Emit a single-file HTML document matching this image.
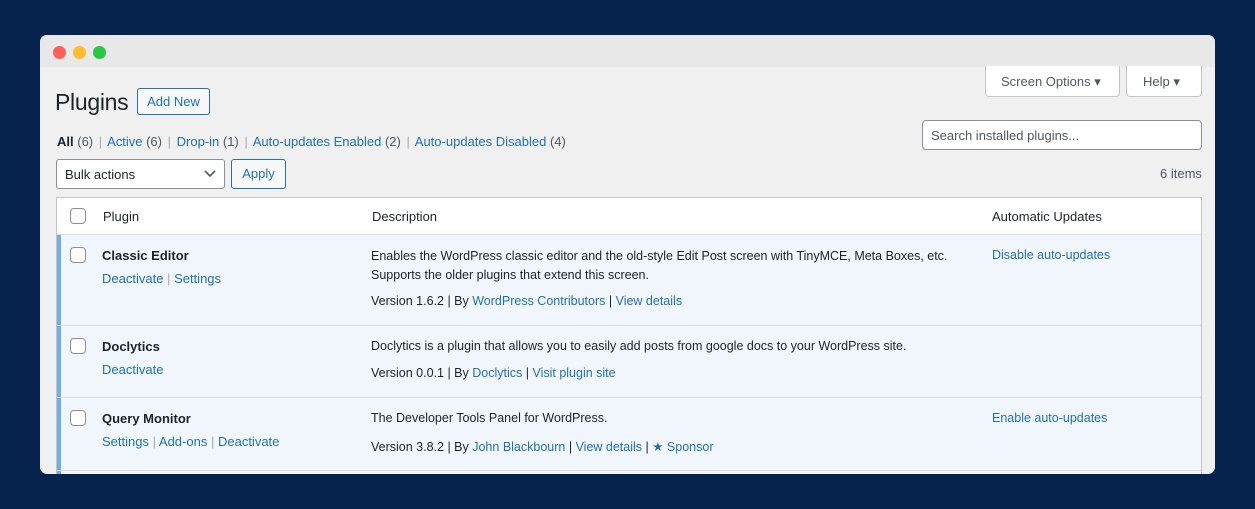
<!DOCTYPE html>
<html><head><style>
*{margin:0;padding:0;box-sizing:border-box}
body{width:1255px;height:509px;background:#06234d;font-family:"Liberation Sans",sans-serif;font-size:13px;color:#1d2327;position:relative;overflow:hidden}
.win{position:absolute;left:40px;top:35px;width:1175px;height:439px;background:#f0f0f1;border-radius:7px;overflow:hidden}
.bar{position:absolute;left:0;top:0;width:100%;height:32px;background:#e8e8e8}
.dot{position:absolute;top:11px;width:13px;height:13px;border-radius:50%}
.a{position:absolute;white-space:nowrap}
a,.l{color:#2271b1;text-decoration:none}
.btn{position:absolute;border:1px solid #2271b1;border-radius:3px;color:#2271b1;background:#f6f7f7;text-align:center}
.sbtn{position:absolute;border:1px solid #c3c4c7;border-radius:3px;background:#fff;color:#50575e;font-size:13px}
.cb{position:absolute;width:16px;height:16px;border:1px solid #8c8f94;border-radius:4px;background:#fff}
.tbl{position:absolute;left:16px;top:162px;width:1146px;height:290px;border:1px solid #c3c4c7;background:#fff}
.row{position:absolute;left:0;width:1144px;background:#f0f6fc;border-top:1px solid #dcdcde}
.row:before{content:"";position:absolute;left:0;top:0;bottom:0;width:4px;background:#72aee6}
.sep{color:#a7aaad}
.fs{margin:0 2px}
.g{color:#50575e}
</style></head><body>
<div class="win">
<div class="bar"></div>
<div class="dot" style="left:13px;background:#fe5f57"></div>
<div class="dot" style="left:33px;background:#febc2e"></div>
<div class="dot" style="left:53px;background:#28c840"></div>

<div class="sbtn" style="left:945px;top:31px;width:135px;height:31px;border-top:none;border-radius:0 0 4px 4px;padding:8px 0 0 15px">Screen Options ▾</div>
<div class="sbtn" style="left:1086px;top:31px;width:76px;height:31px;border-top:none;border-radius:0 0 4px 4px;padding:8px 0 0 16px">Help ▾</div>

<div class="a" style="left:15px;top:54px;font-size:23px;color:#1d2327;letter-spacing:-0.3px">Plugins</div>
<div class="btn" style="left:97px;top:53px;width:73px;height:27px;line-height:25px;font-size:13px">Add New</div>

<div class="a" style="left:17px;top:99px;font-size:13px"><b style="font-weight:600;color:#1d2327">All</b> <span class="g">(6)</span> <span class="sep fs">|</span> <span class="l">Active</span> <span class="g">(6)</span> <span class="sep fs">|</span> <span class="l">Drop-in</span> <span class="g">(1)</span> <span class="sep fs">|</span> <span class="l">Auto-updates Enabled</span> <span class="g">(2)</span> <span class="sep fs">|</span> <span class="l">Auto-updates Disabled</span> <span class="g">(4)</span></div>

<div style="position:absolute;left:882px;top:85px;width:280px;height:30px;border:1px solid #8c8f94;border-radius:4px;background:#fff;padding:7px 8px;color:#50575e">Search installed plugins...</div>

<div style="position:absolute;left:16px;top:124px;width:169px;height:30px;border:1px solid #8c8f94;border-radius:3px;background:#fff;padding:7px 8px">Bulk actions<svg style="position:absolute;right:8px;top:10px" width="12" height="8" viewBox="0 0 12 8"><path d="M1 1l5 5 5-5" fill="none" stroke="#50575e" stroke-width="1.6"/></svg></div>
<div class="btn" style="left:191px;top:124px;width:55px;height:30px;line-height:28px">Apply</div>
<div class="a" style="left:1120px;top:131px;color:#50575e">6 items</div>

<div class="tbl">
<div class="cb" style="left:13px;top:10px"></div>
<div class="a" style="left:46px;top:11px;font-size:13px">Plugin</div>
<div class="a" style="left:315px;top:11px">Description</div>
<div class="a" style="left:935px;top:11px">Automatic Updates</div>

<div class="row" style="top:36px;height:91px">
<div class="cb" style="left:13px;top:12px"></div>
<div class="a" style="left:45px;top:13px;font-weight:bold">Classic Editor</div>
<div class="a" style="left:45px;top:36px"><span class="l">Deactivate</span> <span class="sep">|</span> <span class="l">Settings</span></div>
<div class="a" style="left:314px;top:12px;font-size:12.5px;line-height:19px">Enables the WordPress classic editor and the old-style Edit Post screen with TinyMCE, Meta Boxes, etc.<br>Supports the older plugins that extend this screen.</div>
<div class="a" style="left:314px;top:59px;font-size:12.5px">Version 1.6.2 | By <span class="l">WordPress Contributors</span> | <span class="l">View details</span></div>
<div class="a" style="left:935px;top:13px;font-size:12.5px"><span class="l">Disable auto-updates</span></div>
</div>

<div class="row" style="top:127px;height:72px">
<div class="cb" style="left:13px;top:12px"></div>
<div class="a" style="left:45px;top:13px;font-weight:bold">Doclytics</div>
<div class="a" style="left:45px;top:36px"><span class="l">Deactivate</span></div>
<div class="a" style="left:314px;top:13px;font-size:12.5px">Doclytics is a plugin that allows you to easily add posts from google docs to your WordPress site.</div>
<div class="a" style="left:314px;top:40px;font-size:12.5px">Version 0.0.1 | By <span class="l">Doclytics</span> | <span class="l">Visit plugin site</span></div>
</div>

<div class="row" style="top:199px;height:73px">
<div class="cb" style="left:13px;top:12px"></div>
<div class="a" style="left:45px;top:13px;font-weight:bold">Query Monitor</div>
<div class="a" style="left:45px;top:36px"><span class="l">Settings</span> <span class="sep">|</span> <span class="l">Add-ons</span> <span class="sep">|</span> <span class="l">Deactivate</span></div>
<div class="a" style="left:314px;top:13px;font-size:12.5px">The Developer Tools Panel for WordPress.</div>
<div class="a" style="left:314px;top:41px;font-size:12.5px">Version 3.8.2 | By <span class="l">John Blackbourn</span> | <span class="l">View details</span> | <span class="l">★ Sponsor</span></div>
<div class="a" style="left:935px;top:13px;font-size:12.5px"><span class="l">Enable auto-updates</span></div>
</div>
<div class="row" style="top:272px;height:20px"></div>
</div>
</div>
</body></html>
